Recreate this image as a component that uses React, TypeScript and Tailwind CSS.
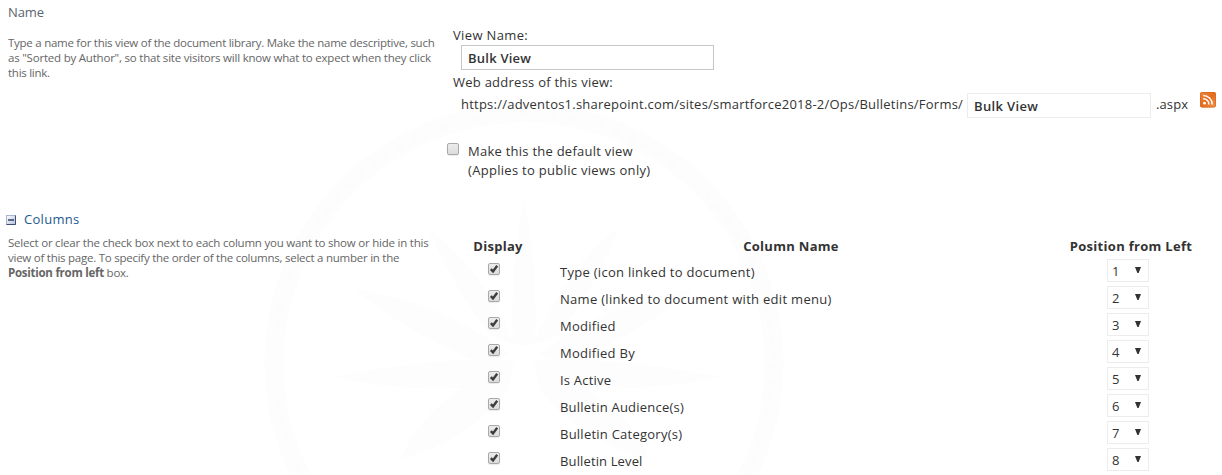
import React from "react";

const columns = [
  { name: "Type (icon linked to document)", ls: "tracking-[0.28px]" },
  { name: "Name (linked to document with edit menu)", ls: "tracking-[0.3px]" },
  { name: "Modified", ls: "tracking-[0.27px]" },
  { name: "Modified By", ls: "tracking-[0.27px]" },
  { name: "Is Active", ls: "tracking-[0.2px]" },
  { name: "Bulletin Audience(s)", ls: "tracking-[0.22px]" },
  { name: "Bulletin Category(s)", ls: "tracking-[0.24px]" },
  { name: "Bulletin Level", ls: "tracking-[0.13px]" },
];

function Checkbox({ checked = false }: { checked?: boolean }) {
  return (
    <span
      role="checkbox"
      aria-checked={checked}
      className="block size-3 shrink-0 rounded-[2px] border border-[#a9a9a9] bg-linear-to-b from-[#ececec] to-[#dcdcdc] shadow-[0_1px_1px_rgba(0,0,0,0.08)]"
    >
      {checked && (
        <svg viewBox="0 0 10 10" className="block size-[10px]">
          <path d="M1.8 5.2 L4 7.4 L8.2 1.8" fill="none" stroke="#3d3d3d" strokeWidth="2.4" />
        </svg>
      )}
    </span>
  );
}

function RssIcon() {
  return (
    <svg viewBox="0 0 16 16" className="size-4">
      <defs>
        <linearGradient id="rss" x1="0" y1="0" x2="1" y2="1">
          <stop offset="0" stopColor="#f0883a" />
          <stop offset="0.5" stopColor="#e46c20" />
          <stop offset="1" stopColor="#f09a50" />
        </linearGradient>
      </defs>
      <rect x="0" y="0" width="16" height="15.5" rx="2" fill="url(#rss)" />
      <rect x="0.5" y="0.5" width="15" height="14.5" rx="1.6" fill="none" stroke="#d9641c" strokeOpacity="0.7" />
      <circle cx="4.5" cy="11.2" r="1.4" fill="#fff" />
      <path d="M3.2 6.7 A5.6 5.6 0 0 1 8.9 12.4 M3.2 3.5 A8.9 8.9 0 0 1 12.2 12.4" fill="none" stroke="#fff" strokeWidth="1.5" />
    </svg>
  );
}

function CollapseIcon() {
  return (
    <svg viewBox="0 0 10 10" className="size-[10px]">
      <defs>
        <linearGradient id="box" x1="0" y1="0" x2="1" y2="1">
          <stop offset="0" stopColor="#ffffff" />
          <stop offset="1" stopColor="#b4c0d6" />
        </linearGradient>
      </defs>
      <rect x="0.5" y="0.5" width="9" height="9" fill="url(#box)" stroke="#a9b6cd" />
      <path d="M9.5 0.5 V9.5 H0.5" fill="none" stroke="#3d4f76" />
      <path d="M2 5 H8" stroke="#3b4a72" strokeWidth="1.6" />
    </svg>
  );
}

function Watermark() {
  return (
    <svg viewBox="0 0 1222 475" className="pointer-events-none absolute inset-0 -z-10 h-[475px] w-[1222px]">
      <circle cx="524" cy="363" r="250" fill="none" stroke="#fdfdfd" strokeWidth="19" />
      <circle cx="524" cy="363" r="249" fill="none" stroke="#fcfcfc" strokeWidth="6" strokeDasharray="7 9" />
      <g fill="#fdfdfd">
        <path d="M524 200 Q538 265 535 345 H513 Q510 265 524 200Z" />
        <path d="M428 228 Q480 265 515 345 L490 335 Q449 280 428 228Z" />
        <path d="M619 228 Q568 265 533 345 L558 335 Q599 280 619 228Z" />
        <path d="M356 290 Q440 300 510 355 L485 365 Q410 335 356 290Z" />
        <path d="M692 290 Q608 300 538 355 L563 365 Q638 335 692 290Z" />
        <path d="M335 377 Q430 357 514 360 L500 385 Q410 395 335 377Z" />
        <path d="M720 377 Q618 357 534 360 L548 385 Q640 395 720 377Z" />
        <path d="M400 460 Q430 390 514 366 L508 390 Q470 440 400 460Z" />
        <path d="M650 460 Q618 390 534 366 L540 390 Q580 440 650 460Z" />
      </g>
    </svg>
  );
}

export default function App() {
  return (
    <div className="relative isolate h-[475px] w-[1222px] overflow-hidden bg-white font-['Open_Sans','Noto_Sans',sans-serif] text-[13px] leading-[19px] tracking-[0.23px] whitespace-nowrap text-[#333]">
      <Watermark />

      <section className="flex h-[209px]">
        <div className="w-[445px] shrink-0 pt-[3px] pl-2">
          <h3 className="tracking-[-0.1px] text-[#5a6470]">Name</h3>
          <p className="mt-[13px] text-[11.5px] leading-[15px] text-[#666]">
            <span className="block tracking-[-0.26px]">Type a name for this view of the document library. Make the name descriptive, such</span>
            <span className="block tracking-[-0.21px]">as "Sorted by Author", so that site visitors will know what to expect when they click</span>
            <span className="block tracking-[-0.26px]">this link.</span>
          </p>
        </div>

        <div className="grow pt-[26px]">
          <div className="pl-2 tracking-[0.36px]">View Name:</div>
          <div className="ml-4 flex h-[25px] w-[253px] items-center border border-[#c6c6c6] bg-white pt-px pl-1.5 font-semibold">
            Bulk View
          </div>
          <div className="mt-[3px] pl-2 tracking-[0.25px]">Web address of this view:</div>
          <div className="flex pl-4">
            <span className="mt-[3px] w-[506px]">https://adventos1.sharepoint.com/sites/smartforce2018-2/Ops/Bulletins/Forms/</span>
            <div className="mt-[1px] flex h-[25px] w-[184px] items-center border border-[#ececec] bg-white pt-px pl-1.5 font-semibold tracking-[0.35px]">
              Bulk View
            </div>
            <span className="mt-[3px] ml-[5px] w-11 tracking-[0.1px]">.aspx</span>
            <RssIcon />
          </div>
          <div className="mt-6 flex pl-0.5">
            <div className="pt-[1px]">
              <Checkbox />
            </div>
            <div className="ml-[9px]">
              <div className="tracking-[0.25px]">Make this the default view</div>
              <div className="tracking-[0.3px]">(Applies to public views only)</div>
            </div>
          </div>
        </div>
      </section>

      <section className="flex">
        <div className="w-[445px] shrink-0 pt-px">
          <div className="flex items-center pl-1.5 text-[#1c5a8e]">
            <CollapseIcon />
            <h3 className="ml-2 tracking-[0.3px]">Columns</h3>
          </div>
          <p className="mt-[6px] pl-2 text-[11.5px] leading-[15px] text-[#666]">
            <span className="block tracking-[-0.22px]">Select or clear the check box next to each column you want to show or hide in this</span>
            <span className="block tracking-[-0.25px]">view of this page. To specify the order of the columns, select a number in the</span>
            <span className="block tracking-[-0.26px]"><b>Position from left</b> box.</span>
          </p>
        </div>

        <div className="grow pt-7">
          <div className="flex h-[21px] font-bold tracking-[0.3px]">
            <div className="w-[106px] text-center">Display</div>
            <div className="w-[480px] text-center">Column Name</div>
            <div className="w-[200px] text-center">Position from Left</div>
          </div>
          {columns.map((column, index) => (
            <div key={column.name} className="flex h-[27px]">
              <div className="w-[115px] pt-[5px] pl-[43px]">
                <Checkbox checked />
              </div>
              <div className={"w-[547px] pt-[5px] " + column.ls}>{column.name}</div>
              <div className="mt-[1px] flex h-[23px] w-[42px] items-center border border-[#ececec] bg-white pt-px pr-[7px] pl-1">
                <span>{index + 1}</span>
                <svg viewBox="0 0 6 6" className="mb-[3px] ml-auto size-1.5">
                  <path d="M0 0 H6 L3.6 6 H2.4 Z" fill="#333" />
                </svg>
              </div>
            </div>
          ))}
        </div>
      </section>
    </div>
  );
}
